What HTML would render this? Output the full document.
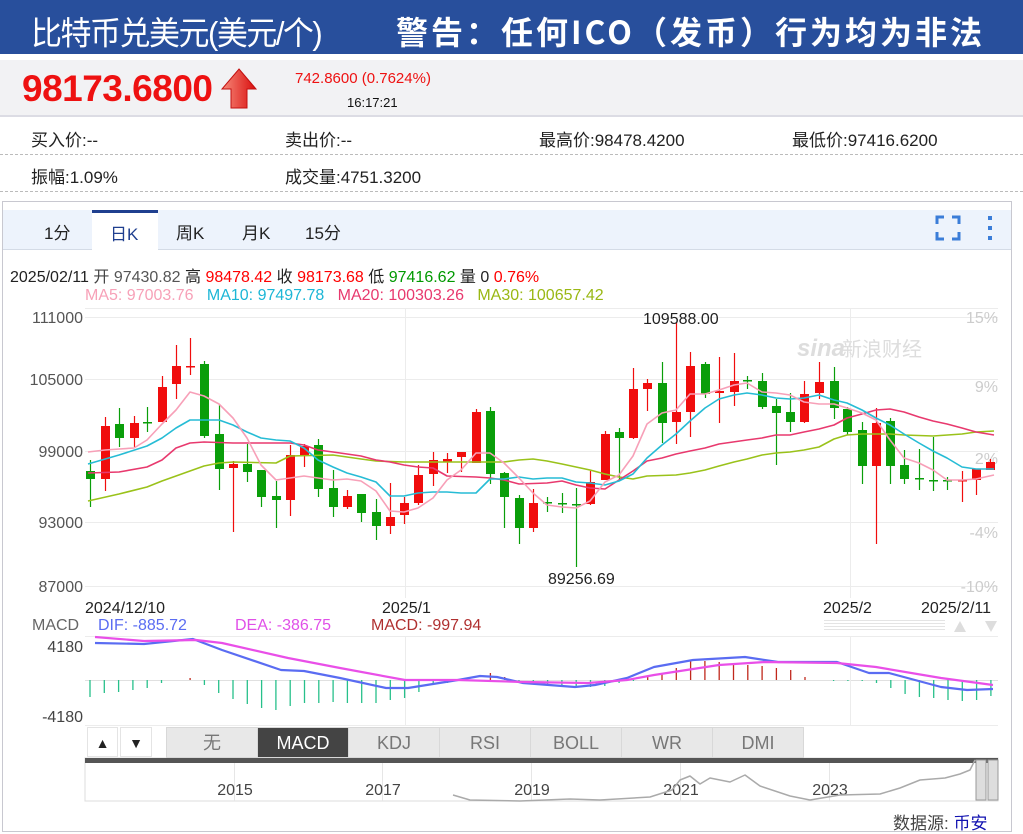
<!DOCTYPE html>
<html><head><meta charset="utf-8"><style>
*{margin:0;padding:0;box-sizing:border-box}
body{width:1023px;height:834px;background:#fff;font-family:"Liberation Sans","Noto Sans CJK SC",sans-serif;position:relative;overflow:hidden;color:#222}
.a{position:absolute;white-space:nowrap}
</style></head><body>
<div class="a" style="left:0;top:0;width:1023px;height:54px;background:#284f9c"></div>
<div class="a" style="left:31px;top:8px;color:#fff;font-size:31px;letter-spacing:-1.5px;transform:scaleY(1.05)">比特币兑美元(美元/个)</div>
<div class="a" style="left:396px;top:8px;color:#fff;font-size:32px;font-weight:bold;letter-spacing:3px;font-family:'Noto Sans CJK SC','Liberation Sans',sans-serif">警告：任何ICO（发币）行为均为非法</div>

<div class="a" style="left:0;top:60px;width:1023px;height:57px;background:#f2f2f4;border-bottom:2px solid #dcdce4"></div>
<div class="a" style="left:22px;top:68px;color:#ee1111;font-size:37px;font-weight:bold;letter-spacing:-0.5px">98173.6800</div>
<svg class="a" style="left:220px;top:67px" width="38" height="44"><defs><linearGradient id="g" x1="0" x2="1"><stop offset="0" stop-color="#f68a7a"/><stop offset="1" stop-color="#d90d0d"/></linearGradient></defs><path d="M19 2 L36 22 L27 22 L27 41 L11 41 L11 22 L2 22 Z" fill="url(#g)" stroke="#c31010" stroke-width="1"/></svg>
<div class="a" style="left:295px;top:70px;color:#ee1111;font-size:15px">742.8600 (0.7624%)</div>
<div class="a" style="left:347px;top:95px;color:#111;font-size:13px">16:17:21</div>

<div class="a" style="left:0;top:154px;width:1023px;border-top:1px dashed #bbb"></div>
<div class="a" style="left:0;top:191px;width:1023px;border-top:1px dashed #bbb"></div>
<div class="a" style="left:31px;top:126px;font-size:17px">买入价:--</div>
<div class="a" style="left:285px;top:126px;font-size:17px">卖出价:--</div>
<div class="a" style="left:539px;top:126px;font-size:17px">最高价:98478.4200</div>
<div class="a" style="left:792px;top:126px;font-size:17px">最低价:97416.6200</div>
<div class="a" style="left:31px;top:163px;font-size:17px">振幅:1.09%</div>
<div class="a" style="left:285px;top:163px;font-size:17px">成交量:4751.3200</div>

<div class="a" style="left:2px;top:201px;width:1010px;height:631px;border:1px solid #c8c8d0"></div>
<div class="a" style="left:3px;top:210px;width:1008px;height:40px;background:#edf3fc;border-bottom:1px solid #d4dbe6"></div>
<div class="a" style="left:92px;top:210px;width:66px;height:41px;background:#fff;border-top:3px solid #1f3f8f"></div>
<div class="a" style="left:44px;top:219px;font-size:17px">1分</div>
<div class="a" style="left:110px;top:220px;font-size:17px;color:#1f3f8f">日K</div>
<div class="a" style="left:176px;top:219px;font-size:17px">周K</div>
<div class="a" style="left:242px;top:219px;font-size:17px">月K</div>
<div class="a" style="left:305px;top:219px;font-size:17px">15分</div>
<svg class="a" style="left:934px;top:214px" width="64" height="28"><g stroke="#3b7dd8" stroke-width="3" fill="none"><path d="M3 10V3H10M18 3H25V10M25 18V25H18M10 25H3V18"/></g><g fill="#3b7dd8"><rect x="54" y="2" width="4" height="4"/><rect x="54" y="12" width="4" height="4"/><rect x="54" y="22" width="4" height="4"/></g></svg>

<div class="a" style="left:10px;top:263px;font-size:16px;color:#222">2025/02/11 <span style="color:#444">开</span> <span style="color:#555">97430.82</span> 高 <span style="color:#f00">98478.42</span> 收 <span style="color:#f00">98173.68</span> 低 <span style="color:#090">97416.62</span> 量 0 <span style="color:#f00">0.76%</span></div>
<div class="a" style="left:85px;top:287px;font-size:16px"><span style="color:#f7a1b8">MA5: 97003.76</span>&nbsp;&nbsp; <span style="color:#1cb6d6">MA10: 97497.78</span>&nbsp;&nbsp; <span style="color:#e8396e">MA20: 100303.26</span>&nbsp;&nbsp; <span style="color:#9ab814">MA30: 100657.42</span></div>

<svg id="ch" class="a" style="left:0;top:0" width="1023" height="834"></svg>

<div class="a" style="left:87px;top:727px;width:31px;height:30px;border:1px solid #e4e4e4;font-size:14px;text-align:center;line-height:30px">▲</div>
<div class="a" style="left:120px;top:727px;width:32px;height:30px;border:1px solid #e4e4e4;font-size:14px;text-align:center;line-height:30px">▼</div>
<div id="tabs" class="a" style="left:166px;top:727px;height:31px;display:flex"></div>

<div class="a" style="left:893px;top:809px;font-size:17px;color:#444">数据源: <span style="color:#1010b0">币安</span></div>

<script>
var s='';
function L(x1,y1,x2,y2,c,w){s+='<line x1="'+x1+'" y1="'+y1+'" x2="'+x2+'" y2="'+y2+'" stroke="'+c+'" stroke-width="'+(w||1)+'"/>';}
function T(x,y,t,c,sz,anc){s+='<text x="'+x+'" y="'+y+'" fill="'+c+'" font-size="'+sz+'" text-anchor="'+(anc||'start')+'" font-family="Liberation Sans,Noto Sans CJK SC,sans-serif">'+t+'</text>';}
function P(pts,c,w){s+='<polyline fill="none" stroke="'+c+'" stroke-width="'+w+'" stroke-linejoin="round" points="'+pts.map(function(p){return p.join(',')}).join(' ')+'"/>';}
[317,379,451,522,586].forEach(function(y){L(85,y+0.5,998,y+0.5,'#ececec');});
L(405.5,308,405.5,598,'#ececec');L(850.5,308,850.5,598,'#ececec');
L(85,308.5,998,308.5,'#ececec');
T(83,323,'111000','#555',16,'end');T(83,385,'105000','#555',16,'end');T(83,457,'99000','#555',16,'end');T(83,528,'93000','#555',16,'end');T(83,592,'87000','#555',16,'end');
T(998,323,'15%','#ccc',16,'end');T(998,392,'9%','#ccc',16,'end');T(998,464,'2%','#ccc',16,'end');T(998,538,'-4%','#ccc',16,'end');T(998,592,'-10%','#ccc',16,'end');
s+='<text x="797" y="356" fill="#ddd" font-size="24" font-style="italic" font-weight="bold" font-family="Liberation Sans,sans-serif">sina</text>';
T(842,356,'新浪财经','#ddd',20);
var C=[[90,471,479,460,507,0],[105,426,479,417,491,1],[119,424,438,408,447,0],[134,423,438,416,447,1],[147,422,422,407,432,0],[162,387,422,376,422,1],[176,366,384,345,399,1],[190,366,366,338,375,1],[204,364,436,361,438,0],[219,434,469,405,490,0],[233,464,468,461,532,1],[247,464,472,444,482,0],[261,470,497,470,507,0],[276,496,500,481,528,0],[290,455,500,445,516,1],[304,446,455,444,467,1],[318,445,489,439,497,0],[333,488,507,470,517,0],[347,496,507,490,509,1],[361,494,513,494,522,0],[376,512,526,499,540,0],[390,517,526,483,534,1],[404,503,515,497,524,1],[418,475,503,465,505,1],[433,460,474,452,486,1],[447,459,462,453,473,1],[461,452,457,452,472,1],[476,412,463,409,463,1],[490,411,474,407,484,0],[504,473,497,472,528,0],[519,498,528,495,544,0],[533,503,528,489,532,1],[547,502,502,497,512,0],[562,503,503,493,513,0],[576,504,504,488,567,0],[590,482,504,471,505,1],[605,434,480,431,480,1],[619,432,438,428,480,0],[633,389,438,368,439,1],[647,383,389,379,411,1],[662,383,423,362,443,0],[676,412,422,322,444,1],[690,366,412,352,437,1],[705,364,394,362,398,0],[719,391,393,357,423,1],[734,381,392,353,406,1],[747,380,380,376,389,0],[762,381,407,373,409,0],[776,406,413,399,465,0],[790,412,422,393,432,0],[804,394,422,381,423,1],[819,382,393,362,399,1],[834,381,408,367,419,0],[847,409,432,407,435,0],[862,430,466,422,484,0],[876,423,466,408,544,1],[890,421,466,418,484,0],[904,465,479,450,484,0],[919,478,478,449,490,0],[933,480,480,437,491,0],[947,480,480,477,490,0],[962,480,480,471,502,1],[976,469,480,469,495,1],[990,462,470,459,470,1]];
C.forEach(function(c){var col=c[5]?'#f00d0d':'#0a9e0a';L(c[0]+0.5,c[3],c[0]+0.5,c[4],col,1.2);var h=Math.max(c[2]-c[1],1.5);s+='<rect x="'+(c[0]-4)+'" y="'+c[1]+'" width="9" height="'+h+'" fill="'+col+'"/>';});
T(643,324,'109588.00','#222',16);T(548,584,'89256.69','#222',16);
var MA5=[[88,452],[105,450],[134,448],[147,440],[162,424],[176,410],[190,392],[204,396],[219,404],[233,418],[247,438],[261,465],[276,480],[290,478],[304,476],[318,478],[333,480],[347,479],[361,481],[376,491],[390,511],[404,512],[418,508],[433,498],[447,480],[461,470],[476,453],[490,453],[504,463],[519,478],[533,493],[547,505],[562,507],[576,508],[590,501],[605,482],[619,475],[633,456],[647,424],[662,413],[676,410],[690,394],[705,394],[719,390],[734,385],[747,383],[762,392],[776,393],[790,395],[804,402],[819,404],[834,404],[847,408],[862,413],[876,420],[890,440],[904,458],[919,463],[933,470],[947,480],[962,480],[976,479],[994,475]];
var MA10=[[88,464],[119,455],[147,446],[162,438],[176,428],[190,420],[204,420],[219,420],[233,425],[247,432],[261,438],[276,440],[290,441],[304,448],[318,460],[333,467],[347,473],[361,477],[376,482],[390,496],[404,496],[418,493],[433,492],[447,492],[461,493],[476,493],[490,479],[504,479],[519,477],[533,479],[547,478],[562,478],[576,482],[590,483],[605,485],[619,481],[633,474],[647,458],[662,445],[676,434],[690,421],[705,408],[719,399],[734,395],[747,393],[762,395],[776,398],[790,399],[804,398],[819,395],[834,400],[847,403],[862,410],[876,418],[890,425],[904,434],[919,443],[933,451],[947,458],[962,467],[976,469],[994,469]];
var MA20=[[88,473],[119,472],[147,467],[162,460],[176,448],[190,443],[204,442],[233,443],[276,443],[290,443],[304,445],[318,450],[333,452],[347,454],[361,456],[376,460],[390,462],[404,465],[418,467],[433,468],[447,476],[476,477],[490,478],[504,480],[519,484],[547,483],[562,481],[576,485],[590,488],[605,489],[619,480],[633,471],[647,461],[662,458],[676,454],[690,451],[705,448],[719,444],[747,440],[762,438],[776,435],[790,435],[804,432],[819,429],[834,425],[847,418],[862,414],[876,410],[890,409],[904,412],[919,417],[933,421],[947,424],[962,428],[976,432],[994,435]];
var MA30=[[88,501],[119,494],[147,487],[162,481],[176,476],[190,471],[204,466],[219,463],[233,462],[276,463],[290,456],[333,455],[347,457],[361,459],[376,461],[404,462],[476,462],[504,462],[519,460],[533,459],[547,461],[562,464],[576,467],[590,470],[605,474],[619,477],[633,479],[647,476],[676,475],[690,473],[705,470],[719,466],[734,462],[747,459],[762,455],[776,453],[790,452],[804,450],[819,447],[834,439],[847,435],[862,434],[890,434],[904,435],[933,436],[962,434],[976,432],[994,431]];
P(MA30,'#9ac21a',1.6);P(MA20,'#e8396e',1.6);P(MA10,'#26bcd5',1.6);P(MA5,'#f7a0b8',1.6);
T(85,613,'2024/12/10','#222',16);T(382,613,'2025/1','#222',16);T(823,613,'2025/2','#222',16);T(921,613,'2025/2/11','#222',16);
T(32,630,'MACD','#666',16);T(98,630,'DIF: -885.72','#5a6cf2',16);T(235,630,'DEA: -386.75','#e050e8',16);T(371,630,'MACD: -997.94','#b03030',16);
for(var i=0;i<4;i++)L(824,620.5+i*3,945,620.5+i*3,'#e4e4e4');
s+='<path d="M954 632L960 621L966 632Z" fill="#ddd"/><path d="M985 621L997 621L991 632Z" fill="#ddd"/>';
L(85,636.5,998,636.5,'#ececec');L(85,725.5,998,725.5,'#ececec');L(85,680.5,998,680.5,'#e0e0e0');
L(405.5,636,405.5,726,'#ececec');L(850.5,636,850.5,726,'#ececec');
T(83,652,'4180','#444',16,'end');T(83,722,'-4180','#444',16,'end');
var H=[-17,-13,-12,-10,-8,-3,0,2,-5,-13,-19,-24,-28,-30,-26,-23,-23,-22,-23,-23,-23,-20,-18,-12,-5,-3,-1,0,7,3,-1,-4,-6,-7,-7,-7,-6,-3,-1,4,7,12,20,19,18,17,15,14,12,10,3,0,-1,-1,-1,-3,-8,-14,-17,-18,-20,-21,-20,-16];
H.forEach(function(h,i){if(h==0)return;var x=90+i*14.3;L(x.toFixed(1),680,x.toFixed(1),680-h,h>0?'#c0281c':'#27c08a',1.3);});
P([[95,643],[144,644],[193,639],[222,650],[281,670],[304,671],[340,678],[386,688],[408,688],[458,680],[480,676],[497,677],[523,683],[575,687],[595,685],[627,678],[654,667],[693,660],[745,657],[778,662],[837,662],[869,673],[889,673],[941,687],[967,690],[993,689]],'#5a6cf2',2.2);
P([[95,637],[144,641],[196,640],[222,643],[288,658],[340,668],[405,680],[458,680],[523,682],[588,683],[627,680],[654,675],[719,665],[765,662],[837,663],[876,667],[941,678],[993,685]],'#e94fe8',2.2);
s+='<rect x="85" y="758" width="913" height="43" fill="#fff" stroke="#ddd"/>';
s+='<rect x="85" y="758" width="913" height="5" fill="#555"/>';
[234,382,531,680,829].forEach(function(x,i){L(x+0.5,763,x+0.5,801,'#e6e6e6');T(x+1,795,String(2015+2*i),'#444',16,'middle');});
var nav=[[453,795],[470,800],[520,801],[570,799],[600,800],[650,797],[672,790],[680,780],[690,776],[700,784],[710,778],[730,782],[745,775],[760,786],[790,796],[810,800],[840,795],[880,794],[900,788],[920,780],[945,778],[960,774],[970,770],[975,760]];
P(nav,'#aaa',1.5);
s+='<rect x="976" y="760" width="10" height="40" fill="#ddd" stroke="#999"/><rect x="988" y="760" width="10" height="40" fill="#ddd" stroke="#999"/>';
document.getElementById('ch').innerHTML=s;
var tabs=['无','MACD','KDJ','RSI','BOLL','WR','DMI'],th='';
tabs.forEach(function(t,i){var act=i==1;th+='<div style="width:92px;height:31px;border:1px solid #d8d8d8;margin-right:-1px;background:'+(act?'#444':'#e8e8e8')+';color:'+(act?'#fff':'#777')+';font-size:18px;text-align:center;line-height:30px">'+t+'</div>';});
document.getElementById('tabs').innerHTML=th;
</script>
</body></html>
